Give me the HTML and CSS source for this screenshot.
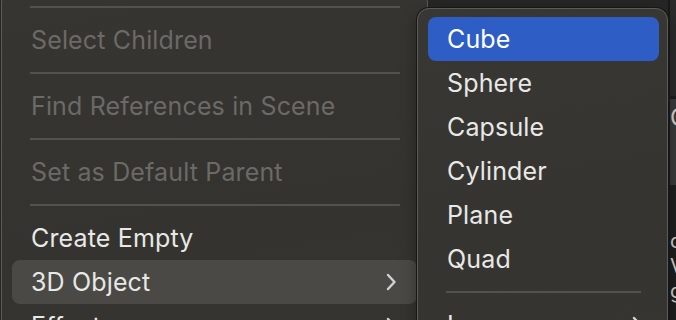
FILE: index.html
```html
<!DOCTYPE html>
<html>
<head>
<meta charset="utf-8">
<link rel="stylesheet" href="styles.css">
</head>
<body>
<div class="scene">
  <div class="bg-strip">
    <div class="bg-band"></div>
    <div class="bg-panel"><span class="bg-letter">C</span></div>
    <div class="bg-lines"><span>d</span><span>V</span><span>g</span></div>
  </div>

  <div class="menu main-menu">
    <div class="sep"></div>
    <div class="item disabled">Select Children</div>
    <div class="sep"></div>
    <div class="item disabled">Find References in Scene</div>
    <div class="sep"></div>
    <div class="item disabled">Set as Default Parent</div>
    <div class="sep"></div>
    <div class="item">Create Empty</div>
    <div class="item hover"><span>3D Object</span><svg class="chev" width="12" height="20" viewBox="0 0 12 20"><polyline points="3,3 9.5,10 3,17" fill="none" stroke="#d2d2d0" stroke-width="2.4" stroke-linecap="round" stroke-linejoin="round"/></svg></div>
    <div class="item"><span>Effects</span><svg class="chev" width="12" height="20" viewBox="0 0 12 20"><polyline points="3,3 9.5,10 3,17" fill="none" stroke="#d2d2d0" stroke-width="2.4" stroke-linecap="round" stroke-linejoin="round"/></svg></div>
  </div>

  <div class="menu sub-menu">
    <div class="item selected">Cube</div>
    <div class="item">Sphere</div>
    <div class="item">Capsule</div>
    <div class="item">Cylinder</div>
    <div class="item">Plane</div>
    <div class="item">Quad</div>
    <div class="sep"></div>
    <div class="item"><span>Legacy</span><svg class="chev" width="12" height="20" viewBox="0 0 12 20"><polyline points="3,3 9.5,10 3,17" fill="none" stroke="#d2d2d0" stroke-width="2.4" stroke-linecap="round" stroke-linejoin="round"/></svg></div>
  </div>
</div>
</body>
</html>
```
FILE: styles.css
```css
html, body {
  margin: 0;
  padding: 0;
  background: #1d1d1d;
  overflow: hidden;
}
.scene {
  position: relative;
  width: 676px;
  height: 320px;
  overflow: hidden;
  font-family: "Inter", "Liberation Sans", sans-serif;
  background: #262626;
}
.bg-strip {
  position: absolute;
  left: 668px;
  top: 0;
  width: 8px;
  height: 320px;
  background: #1f1f1f;
  display: flex;
  flex-direction: column;
  overflow: hidden;
}
.bg-band {
  height: 96px;
  background: #2b2b2b;
  border-left: 2px solid #1a1a1a;
}
.bg-panel {
  height: 80px;
  background: #3a3a3a;
  border-top: 3px solid #1e1e1e;
  border-left: 2px solid #1a1a1a;
  padding-top: 6px;
}
.bg-letter {
  display: block;
  color: #cfcfcf;
  font-size: 24px;
  line-height: 26px;
}
.bg-lines {
  flex: 1;
  display: flex;
  flex-direction: column;
  padding-top: 44px;
  border-left: 2px solid #1a1a1a;
  color: #cfcfcf;
  font-size: 20px;
  line-height: 25px;
}
.bg-lines span {
  display: block;
}

.menu {
  position: absolute;
  box-sizing: border-box;
  background: linear-gradient(170deg, #363531 0%, #34332f 60%, #353430 100%);
  border: 1px solid #5c5b57;
  display: flex;
  flex-direction: column;
}
.main-menu {
  left: 1px;
  top: -10px;
  width: 427px;
  height: 380px;
  padding: 5px 10px;
  border-radius: 12px;
}
.sub-menu {
  left: 417px;
  top: 8px;
  width: 251px;
  height: 360px;
  padding: 8px 8px 8px 10px;
  border-radius: 12px;
  box-shadow: 0 0 0 1px #171717, 0 6px 16px rgba(0, 0, 0, 0.35);
  background: linear-gradient(170deg, #383733 0%, #353430 60%, #363531 100%);
}
.sep {
  height: 22px;
  flex: none;
  position: relative;
}
.sep::after {
  content: "";
  position: absolute;
  left: 18px;
  right: 17px;
  top: 10px;
  height: 2px;
  background: #53524e;
}
.sub-menu .sep::after {
  left: 18px;
  right: 18px;
}
.item {
  flex: none;
  height: 44px;
  box-sizing: border-box;
  padding: 0 20px 0 19px;
  display: flex;
  align-items: center;
  justify-content: space-between;
  font-size: 25px;
  letter-spacing: 0.15px;
  color: #e8e8e6;
  border-radius: 8px;
  white-space: nowrap;
}
.item.disabled {
  color: #6b6a66;
}
.item.hover {
  background: #4a4945;
}
.item.selected {
  background: #2e5ec5;
  color: #ffffff;
}
.chev {
  flex: none;
  display: block;
}
.sub-menu .item {
  padding-right: 16px;
}
```
